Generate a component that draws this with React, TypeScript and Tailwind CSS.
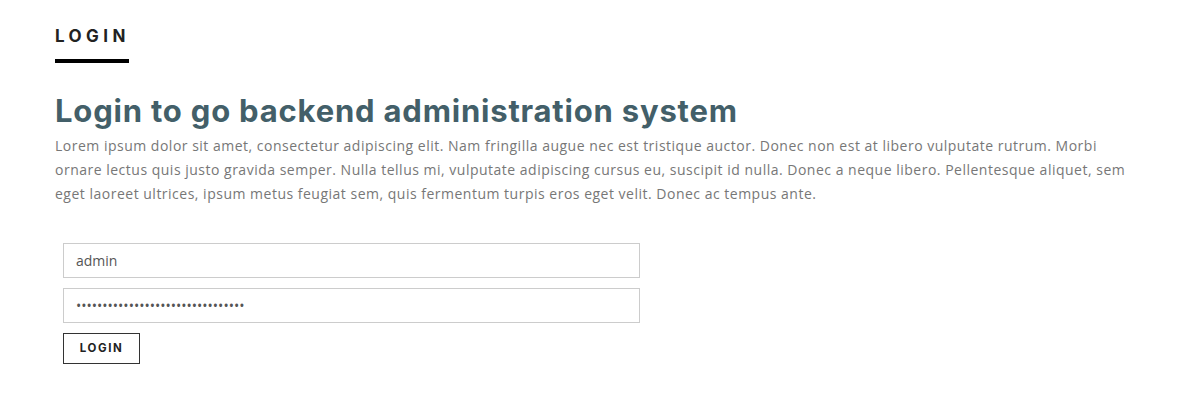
import React from "react";

export default function App() {
  return (
    <div className="w-[1185px] h-[414px] bg-white" style={{ fontFamily: '"Open Sans", sans-serif' }}>
      <div className="pl-[55px] pr-[55px] pt-[24px]">
        <div className="inline-flex flex-col">
          <div
            className="text-[17px] font-bold tracking-[0.26em] text-[#222] leading-[20px]"
            style={{ fontFamily: 'Inter, sans-serif' }}
          >
            LOGIN
          </div>
          <div className="mt-[13px] h-[4px] w-[74px] bg-black" />
        </div>
        <h1
          className="mt-[28px] text-[31px] font-bold leading-[40px] tracking-[0.8px] text-[#435f69]"
          style={{ fontFamily: 'Inter, sans-serif' }}
        >
          Login to go backend administration system
        </h1>
        <p className="mt-[3px] text-[14px] leading-[24px] tracking-[0.5px] text-[#777]">
          Lorem ipsum dolor sit amet, consectetur adipiscing elit. Nam fringilla augue nec est tristique auctor. Donec non est at libero vulputate rutrum. Morbi ornare lectus quis justo gravida semper. Nulla tellus mi, vulputate adipiscing cursus eu, suscipit id nulla. Donec a neque libero. Pellentesque aliquet, sem eget laoreet ultrices, ipsum metus feugiat sem, quis fermentum turpis eros eget velit. Donec ac tempus ante.
        </p>
        <form className="mt-[37px] ml-[8px] flex flex-col w-[577px]">
          <input
            type="text"
            readOnly
            value="admin"
            className="h-[35px] w-full border border-[#ccc] px-[12px] text-[14px] text-[#555] outline-none"
          />
          <input
            type="password"
            readOnly
            value="12345678901234567890123456789012"
            className="mt-[10px] h-[35px] w-full border border-[#ccc] px-[12px] text-[14px] text-[#555] outline-none"
          />
          <div>
            <button
              type="button"
              className="mt-[10px] h-[31px] w-[77px] border border-[#333] bg-white text-[11.5px] font-bold tracking-[0.14em] text-[#222]"
              style={{ fontFamily: 'Inter, sans-serif' }}
            >
              LOGIN
            </button>
          </div>
        </form>
      </div>
    </div>
  );
}
